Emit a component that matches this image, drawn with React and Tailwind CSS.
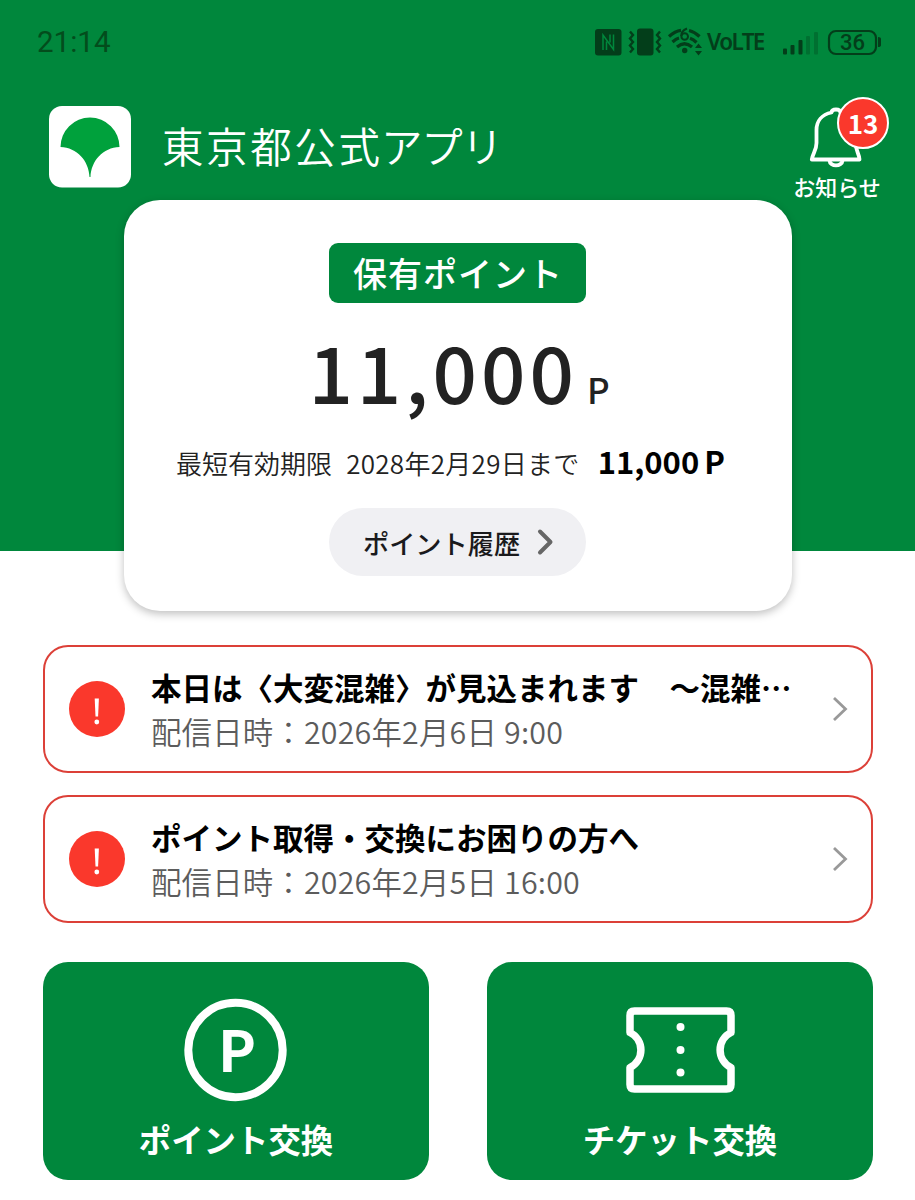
import React from 'react';

const notices = [
  { title: '本日は〈大変混雑〉が見込まれます　〜混雑…', date: '配信日時：2026年2月6日 9:00' },
  { title: 'ポイント取得・交換にお困りの方へ', date: '配信日時：2026年2月5日 16:00' },
];

const StatusIcons = () => (
  <div className="flex items-center text-[#033e1a]">
    {/* NFC + vibrate + wifi */}
    <svg width="110" height="32" viewBox="0 0 110 32" fill="none">
      <rect x="0" y="3" width="26.5" height="26.5" rx="3" fill="currentColor" />
      <path d="M8 24V9L18.500 23.500V8.500M11.500 24V15.500M15 8.500V16.500" stroke="#00873c" strokeWidth="1.500" />
      <rect x="42" y="2.500" width="16.500" height="27" rx="3" fill="currentColor" />
      <path d="M35 5.500l3 3.500-3 3.500 3 3.500-3 3.500 3 3.500-3 3.500M65 5.500l-3 3.500 3 3.500-3 3.500 3 3.500-3 3.500 3 3.500" stroke="currentColor" strokeWidth="2.400" />
      <path d="M74 10.500Q80 5 86 4.300M94 4.500Q100 6 104.500 10.500M77.500 16Q81 12.700 84 12M95 12.300Q98.500 13.500 101.500 16.500M82 21Q89.500 14.500 97 21" stroke="currentColor" strokeWidth="3.200" />
      <path d="M92 2.500Q86 5 86.200 10" stroke="currentColor" strokeWidth="2" />
      <circle cx="89.700" cy="10.500" r="3.300" stroke="currentColor" strokeWidth="2" />
      <circle cx="89.700" cy="24.500" r="2.700" fill="currentColor" />
      <path d="M100 22l3.500-4.500 3.500 4.500zM100 25h7l-3.500 4.500z" fill="currentColor" />
    </svg>
    <span className="ml-[2px] w-[58px] whitespace-nowrap font-['Noto_Sans'] text-[22.500px] font-semibold leading-8 tracking-[-1.600px]">VoLTE</span>
    {/* signal + battery */}
    <svg className="ml-[18px]" width="100" height="32" viewBox="0 0 100 32">
      <g fill="currentColor">
        <rect x="0" y="22.500" width="4" height="6" rx="1" />
        <rect x="7.500" y="19" width="4" height="9.500" rx="1" />
        <rect x="15.500" y="14" width="4" height="14.500" rx="1" />
        <g opacity=".3">
          <rect x="23" y="10" width="4" height="18.500" rx="1" />
          <rect x="31" y="6" width="4" height="22.500" rx="1" />
        </g>
        <path d="M95 11q3 0 3 2v6q0 2-3 2z" />
      </g>
      <rect x="46" y="5" width="47" height="23" rx="7" fill="none" stroke="currentColor" strokeWidth="2.200" />
      <text x="69.500" y="24" textAnchor="middle" className="font-['Roboto'] text-[22px] font-medium" fill="currentColor">36</text>
    </svg>
  </div>
);

const GinkgoLogo = () => (
  <svg width="82" height="82" viewBox="0 0 82 82">
    <rect width="82" height="81.500" rx="13" fill="#fff" />
    <path d="M11.500 41A29.500 29.500 0 0 1 70.500 41C54 41.500 42 55 41.500 71H40.500C40 55 28 41.500 11.500 41Z" fill="#00a13c" />
  </svg>
);

const NoticeBell = () => (
  <button className="relative flex w-[90px] flex-col items-center text-white">
    <svg width="56" height="64" viewBox="0 0 56 64" fill="none" stroke="currentColor" strokeWidth="3.800" strokeLinejoin="round">
      <path d="M22.500 7.500C23 3.500 31 3.500 31.500 7.500C41 9.500 46.500 16 46.500 25V38C46.500 45 50 48 50.500 54.500H2.800C4 48 7.500 45 7.500 38V25C7.500 16 13 9.500 22.500 7.500Z" />
      <path d="M20.500 55.500C21 62 33 62 33.500 55.500" />
    </svg>
    <span className="mt-[3px] whitespace-nowrap text-[22px] font-medium leading-7">お知らせ</span>
    <span className="absolute left-[45px] top-[-8px] flex h-[52px] w-[52px] items-center justify-center rounded-full border-2 border-white bg-[#fa382c] text-[26px] font-bold leading-none">
      <span className="-mt-px">13</span>
    </span>
  </button>
);

const NoticeCard = ({ title, date }) => (
  <button className="flex h-[128px] w-full items-center rounded-[25px] border-2 border-[#dc4038] bg-white pl-6 pr-[22px] text-left">
    <svg className="shrink-0" width="56" height="56" viewBox="0 0 56 56">
      <circle cx="28" cy="28" r="28" fill="#fa382c" />
      <path d="M25.700 17.500h4.200l-.8 18h-2.600z" fill="#fff" />
      <circle cx="27.800" cy="41" r="2.400" fill="#fff" />
    </svg>
    <div className="ml-[26px] flex-1 whitespace-nowrap">
      <p className="text-[30.500px] font-bold leading-[44px] text-black">{title}</p>
      <p className="text-[30.400px] font-[350] leading-[44px] tracking-[0.200px] text-[#5c5c5c]">{date}</p>
    </div>
    <svg className="shrink-0" width="18" height="28" viewBox="0 0 18 28" fill="none" stroke="#999" strokeWidth="2.800">
      <path d="M3 3L14.500 14L3 25" />
    </svg>
  </button>
);

const PointIcon = () => (
  <svg width="104" height="104" viewBox="0 0 104 104">
    <circle cx="51.500" cy="52" r="47.200" fill="none" stroke="#fff" strokeWidth="8" />
    <text x="53" y="74" textAnchor="middle" fill="#fff" className="text-[57px] font-bold">P</text>
  </svg>
);

const TicketIcon = () => (
  <svg width="110" height="104" viewBox="0 0 110 104" fill="none">
    <path d="M10 13H101.500Q106 13 106 17.500V34.500A19.500 19.500 0 0 0 106 69.500V86.500Q106 91 101.500 91H9.500Q5 91 5 86.500V69.500A19.500 19.500 0 0 0 5 34.500V17.500Q5 13 9.500 13Z" stroke="#fff" strokeWidth="7.500" strokeLinejoin="round" />
    <g fill="#fff">
      <circle cx="55.500" cy="29" r="4" />
      <circle cx="55.500" cy="52" r="4" />
      <circle cx="55.500" cy="74.500" r="4" />
    </g>
  </svg>
);

const ActionTile = ({ icon: Icon, label }) => (
  <button className="flex h-[218px] w-[386px] flex-col items-center rounded-[25px] bg-[#00873c] pt-9 text-white">
    <Icon />
    <span className="mt-[13px] text-[32.400px] font-bold leading-[48px]">{label}</span>
  </button>
);

export default function App() {
  return (
    <div className="h-[1200px] w-[915px] overflow-hidden bg-white font-['Noto_Sans_CJK_JP',sans-serif]">
      <header className="flex h-[551px] flex-col bg-[#00873c]">
        <div className="flex h-[84px] shrink-0 items-center justify-between pl-[37px] pr-8">
          <span className="font-['Roboto'] text-[29.500px] leading-9 text-[#034d1c]">21:14</span>
          <StatusIcons />
        </div>

        <div className="flex h-[116px] shrink-0 items-start pl-[49px] pr-[33px]">
          <div className="mt-[22px]"><GinkgoLogo /></div>
          <h1 className="ml-[31px] mt-[31px] flex-1 whitespace-nowrap text-[41.500px] font-[350] leading-[60px] tracking-[2.600px] text-white [font-feature-settings:'palt']">東京都公式アプリ</h1>
          <div className="mt-[21px]"><NoticeBell /></div>
        </div>

        {/* Point card hangs over the bottom of the header */}
        <section className="flex h-[411px] w-[668px] shrink-0 flex-col items-center self-center rounded-[36px] bg-white pt-[43px] shadow-[0_3px_9px_rgba(0,0,0,0.25)]">
          <div className="flex h-[60px] w-[257px] items-center justify-center rounded-[9px] bg-[#00873c] pb-[2px] pl-px text-[34px] font-medium tracking-[1px] text-white">保有ポイント</div>
          <div className="ml-[3px] mt-[11px] flex items-baseline text-[#222]">
            <span className="text-[78px] font-medium leading-[112px] tracking-[4px]">11,000</span>
            <span className="ml-[9px] text-[35px] font-medium">P</span>
          </div>
          <div className="mr-[14px] mt-[13px] flex items-baseline whitespace-nowrap text-[26px] font-[350] leading-[44px] text-[#222]">
            <span>最短有効期限</span>
            <span className="ml-[14px] tracking-[0.300px]">2028年2月29日まで</span>
            <span className="ml-[18px] text-[31px] font-bold text-black">11,000</span>
            <span className="ml-[5px] text-[31px] font-bold text-black">P</span>
          </div>
          <button className="mt-[23px] flex h-[68px] w-[257px] items-center rounded-full bg-[#f0f0f3] pl-[34px] text-[26.200px] font-medium text-[#1a1a1c]">
            <span className="mt-[3px]">ポイント履歴</span>
            <svg className="ml-[17px]" width="18" height="28" viewBox="0 0 18 28" fill="none" stroke="#666" strokeWidth="4" strokeLinecap="round" strokeLinejoin="round">
              <path d="M3 3.500L13.500 14L3 24.500" />
            </svg>
          </button>
        </section>
      </header>

      <main className="pl-[43px] pr-[42px] pt-[94px]">
        <div className="flex flex-col gap-[22px]">
          {notices.map((n) => (
            <NoticeCard key={n.title} title={n.title} date={n.date} />
          ))}
        </div>
        <div className="mt-[39px] flex justify-between">
          <ActionTile icon={PointIcon} label="ポイント交換" />
          <ActionTile icon={TicketIcon} label="チケット交換" />
        </div>
      </main>
    </div>
  );
}
